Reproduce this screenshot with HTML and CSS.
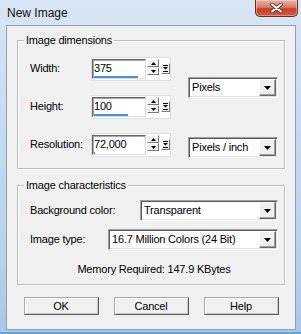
FILE: index.html
```html
<html>
  <head>
    <title>New Image</title>
    <link rel="stylesheet" href="styles.css">
  </head>
  <body>
    <div class="window">
      <div class="titlebar">
        <span class="title">New Image</span>
        <div class="close">
          <svg width="13" height="10" viewBox="0 0 13 10">
            <path d="M2 1.5l9 7M11 1.5l-9 7" stroke="#4a3a3a" stroke-width="3.6" stroke-linecap="round"/>
            <path d="M2 1.5l9 7M11 1.5l-9 7" stroke="#fff" stroke-width="2" stroke-linecap="round"/>
          </svg>
        </div>
      </div>

      <div class="client">
        <fieldset class="group">
          <legend>Image dimensions</legend>
          <div class="dims">
            <div class="fields">
              <div class="row">
                <span class="lbl">Width:</span>
                <div class="spin">
                  <div class="field"><span>375</span><i class="bar" style="width:44px"></i></div>
                  <div class="arrows">
                    <span class="btn"><svg width="5" height="3"><path d="M2.5 0L5 3H0z"/></svg></span>
                    <span class="btn"><svg width="5" height="3"><path d="M0 0h5L2.5 3z"/></svg></span>
                  </div>
                  <span class="btn extra"><svg width="5" height="7" viewBox="0 0 5 7"><path d="M0 0h5v1H0zM0 2h5L2.5 4.5zM0 6h5v1H0z"/></svg></span>
                </div>
              </div>
              <div class="row">
                <span class="lbl">Height:</span>
                <div class="spin">
                  <div class="field"><span>100</span><i class="bar" style="width:34px"></i></div>
                  <div class="arrows">
                    <span class="btn"><svg width="5" height="3"><path d="M2.5 0L5 3H0z"/></svg></span>
                    <span class="btn"><svg width="5" height="3"><path d="M0 0h5L2.5 3z"/></svg></span>
                  </div>
                  <span class="btn extra"><svg width="5" height="7" viewBox="0 0 5 7"><path d="M0 0h5v1H0zM0 2h5L2.5 4.5zM0 6h5v1H0z"/></svg></span>
                </div>
              </div>
              <div class="row">
                <span class="lbl">Resolution:</span>
                <div class="spin">
                  <div class="field"><span>72,000</span><i class="bar" style="width:1px"></i></div>
                  <div class="arrows">
                    <span class="btn"><svg width="5" height="3"><path d="M2.5 0L5 3H0z"/></svg></span>
                    <span class="btn"><svg width="5" height="3"><path d="M0 0h5L2.5 3z"/></svg></span>
                  </div>
                  <span class="btn extra"><svg width="5" height="7" viewBox="0 0 5 7"><path d="M0 0h5v1H0zM0 2h5L2.5 4.5zM0 6h5v1H0z"/></svg></span>
                </div>
              </div>
            </div>
            <div class="units">
              <div class="combo w-unit">
                <span class="val">Pixels</span>
                <span class="drop"><svg width="7" height="4"><path d="M0 0h7L3.5 4z"/></svg></span>
              </div>
              <div class="combo w-unit">
                <span class="val">Pixels / inch</span>
                <span class="drop"><svg width="7" height="4"><path d="M0 0h7L3.5 4z"/></svg></span>
              </div>
            </div>
          </div>
        </fieldset>

        <fieldset class="group second">
          <legend>Image characteristics</legend>
          <div class="chars">
            <div class="line">
              <span class="lbl">Background color:</span>
              <div class="combo w-bg">
                <span class="val">Transparent</span>
                <span class="drop"><svg width="7" height="4"><path d="M0 0h7L3.5 4z"/></svg></span>
              </div>
            </div>
            <div class="line">
              <span class="lbl">Image type:</span>
              <div class="combo w-type">
                <span class="val">16.7 Million Colors (24 Bit)</span>
                <span class="drop"><svg width="7" height="4"><path d="M0 0h7L3.5 4z"/></svg></span>
              </div>
            </div>
            <p class="memory">Memory Required: 147.9 KBytes</p>
          </div>
        </fieldset>

        <div class="buttons">
          <button class="push">OK</button>
          <button class="push">Cancel</button>
          <button class="push">Help</button>
        </div>
      </div>
    </div>
  </body>
</html>
```

FILE: styles.css
```css
body {
  margin: 0;
}
.window {
  width: 301px;
  height: 334px;
  box-sizing: border-box;
  overflow: hidden;
  background: linear-gradient(180deg, #d8e6f4 0%, #cadcef 30%, #bcd3ec 70%, #a9c8e7 100%);
  box-shadow: inset 0 -2px 0 #58a8d8;
  font-family: "Liberation Sans", Arial, sans-serif;
  font-size: 11px;
  letter-spacing: -0.2px;
  color: #000;
}
.titlebar {
  height: 25px;
  display: flex;
  justify-content: space-between;
  align-items: flex-start;
}
.title {
  font-size: 12px;
  letter-spacing: 0;
  line-height: 14px;
  padding: 6px 0 0 7px;
  color: #111;
}
.close {
  width: 43px;
  height: 17px;
  margin-right: 3px;
  box-sizing: border-box;
  border: 1px solid #6a2b20;
  border-top: none;
  border-radius: 0 0 5px 5px;
  background: linear-gradient(180deg, #eab0a2 0%, #dd7a66 45%, #c5402a 55%, #d65a3f 100%);
  box-shadow: inset 0 0 0 1px rgba(255, 255, 255, 0.35);
  display: flex;
  align-items: center;
  justify-content: center;
}
.client {
  margin: 0 5px 0 6px;
  height: 305px;
  box-sizing: border-box;
  border: 1px solid #8d9fb5;
  background: #f0f0f0;
  padding: 7px 10px 0;
  display: flex;
  flex-direction: column;
}
.group {
  margin: 0;
  padding: 0;
  min-width: 0;
  border: 1px solid #bdbdbd;
  box-shadow: 1px 1px 0 #fff, inset 1px 1px 0 #fff;
}
.group legend {
  margin-left: 6px;
  padding: 0 2px;
  line-height: 14px;
}
.second {
  margin-top: 9px;
}
.dims {
  display: flex;
  align-items: flex-start;
  justify-content: space-between;
  padding: 10px 6px 10px 12px;
}
.fields {
  display: flex;
  flex-direction: column;
  gap: 14px;
}
.row {
  display: flex;
  align-items: center;
  height: 24px;
}
.lbl {
  width: 61px;
  margin-top: -2px;
}
.spin {
  width: 80px;
  height: 24px;
  box-sizing: border-box;
  background: #fff;
  border: 1px solid #dedede;
  padding-top: 1px;
  display: flex;
  align-items: flex-start;
}
.field {
  width: 54px;
  height: 20px;
  box-sizing: border-box;
  border: 1px solid;
  border-color: #646464 #dcdcdc #dcdcdc #646464;
  box-shadow: inset 1px 1px 0 #a8a8a8;
  padding: 2px 0 0 1px;
  display: flex;
  flex-direction: column;
  justify-content: space-between;
  line-height: 13px;
}
.bar {
  display: block;
  height: 2px;
  background: #4a90dc;
}
.arrows {
  margin-left: 1px;
  display: flex;
  flex-direction: column;
}
.btn {
  width: 12px;
  height: 8px;
  box-sizing: border-box;
  background: #f0f0f0;
  border: 1px solid;
  border-color: #fff #7a7a7a #7a7a7a #fff;
  display: flex;
  align-items: center;
  justify-content: center;
}
.extra {
  width: 9px;
  height: 11px;
  margin: 4px 0 0 2px;
}
.units {
  display: flex;
  flex-direction: column;
  gap: 39px;
  padding-top: 20px;
}
.combo {
  height: 21px;
  box-sizing: border-box;
  background: #fff;
  border: 1px solid;
  border-color: #a0a0a0 #fff #fff #a0a0a0;
  box-shadow: inset 1px 1px 0 #5a5a5a, inset -1px -1px 0 #e3e3e3;
  padding: 1px;
  display: flex;
  align-items: stretch;
}
.val {
  flex: 1;
  padding-left: 2px;
  line-height: 17px;
  white-space: nowrap;
  overflow: hidden;
}
.drop {
  width: 17px;
  box-sizing: border-box;
  background: #f0f0f0;
  border: 1px solid;
  border-color: #fff #696969 #696969 #fff;
  box-shadow: inset -1px -1px 0 #a0a0a0;
  display: flex;
  align-items: center;
  justify-content: center;
}
.w-unit {
  width: 90px;
}
.w-bg {
  width: 138px;
}
.w-type {
  width: 170px;
}
.chars {
  padding: 8px 6px 7px 12px;
  display: flex;
  flex-direction: column;
  gap: 8px;
}
.line {
  display: flex;
  align-items: center;
  justify-content: space-between;
}
.line .lbl {
  width: auto;
}
.memory {
  margin: 4px 0 0;
  line-height: 15px;
  text-align: center;
}
.buttons {
  display: flex;
  justify-content: center;
  gap: 15px;
  margin-top: 12px;
}
.push {
  width: 75px;
  height: 18px;
  padding: 0;
  font: inherit;
  letter-spacing: inherit;
  color: #000;
  background: #f0f0f0;
  border: 1px solid;
  border-color: #a9a9a9 #5c5c5c #5c5c5c #a9a9a9;
  box-shadow: inset 1px 1px 0 #fff, inset -1px -1px 0 #c8c8c8;
  border-radius: 0;
}
```
